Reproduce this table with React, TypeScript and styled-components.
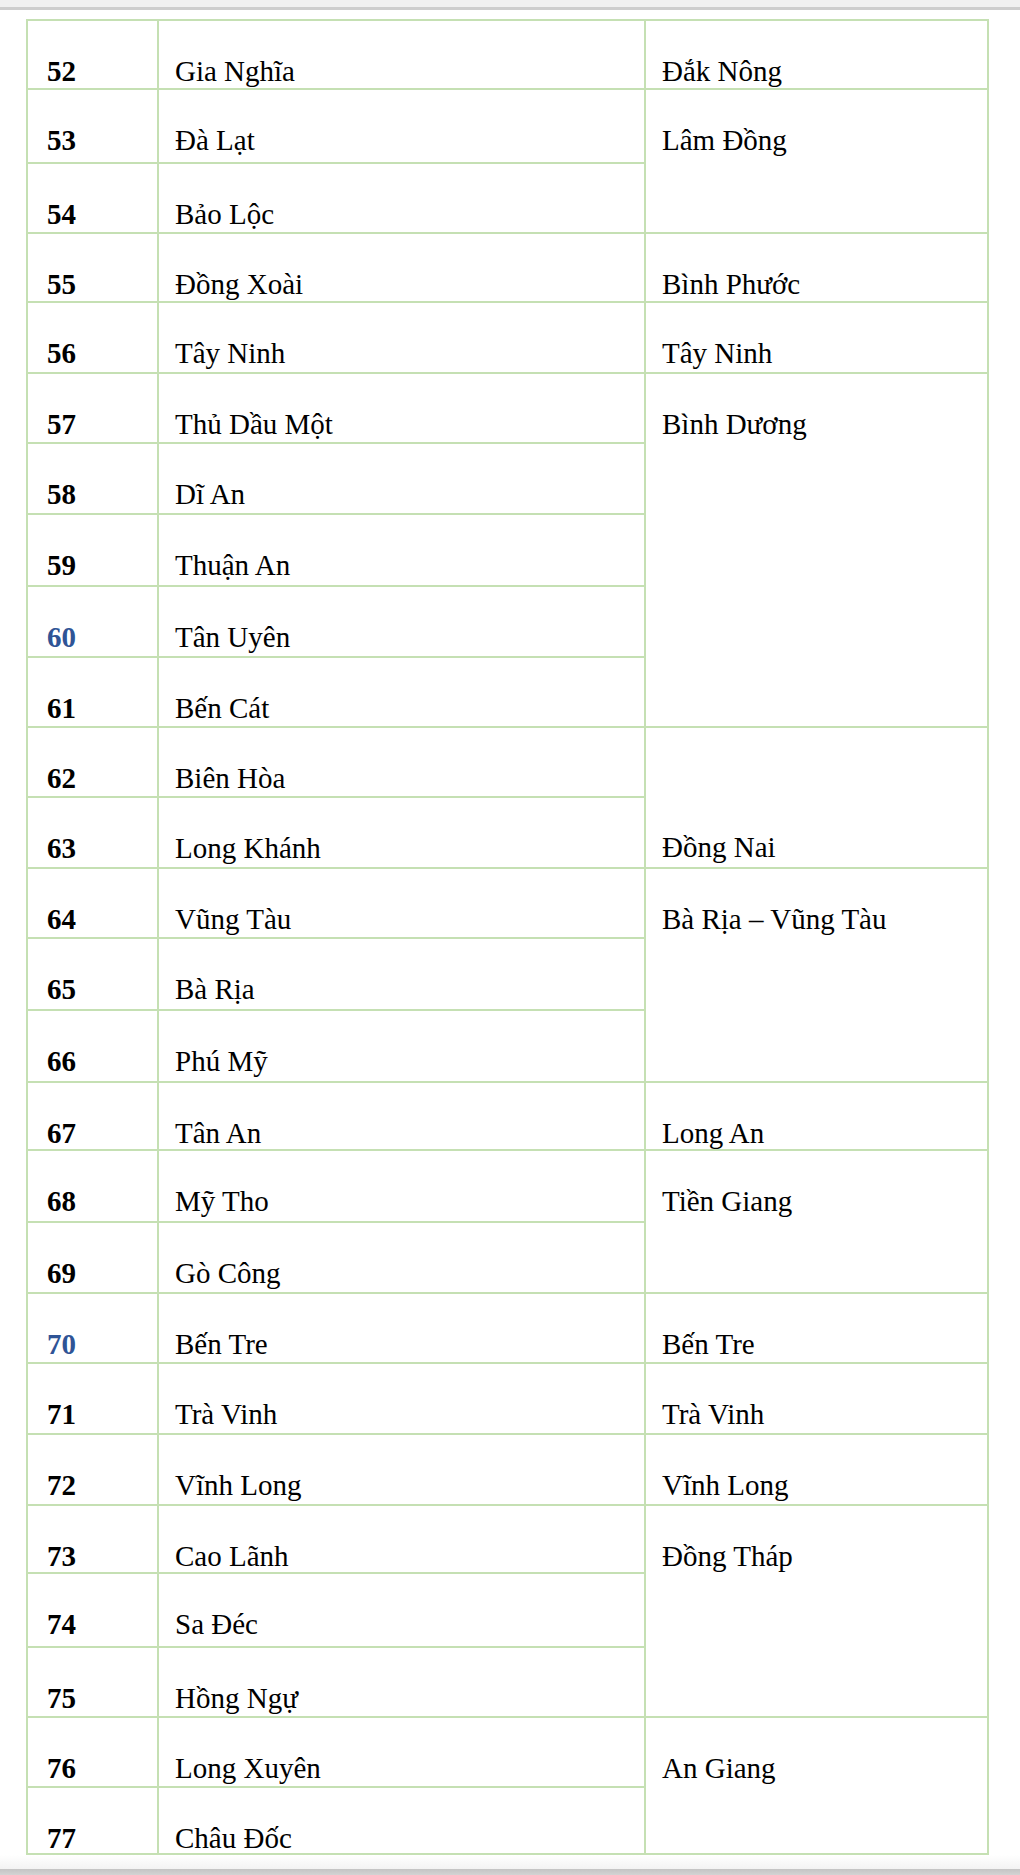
import React from "react";
import styled, { createGlobalStyle } from "styled-components";

const GlobalStyle = createGlobalStyle`
  html, body { margin: 0; padding: 0; background: #ffffff; }
  #root { min-height: 1875px; }
`;

const LINE = "#c5e0b3";

const Page = styled.div`
  display: flex;
  flex-direction: column;
  height: 1875px;
  background: #ffffff;
  overflow: hidden;
`;

const TopBar = styled.div`
  flex: 0 0 auto;
  height: 7px;
  background: #f0f0f0;
  border-bottom: 3px solid #cdcdcd;
`;

const Content = styled.main`
  flex: 1 1 auto;
  padding: 9px 0 0 26px;
`;

const BottomFade = styled.div`
  flex: 0 0 14px;
  background: linear-gradient(#ffffff, #f3f3f3);
`;

const BottomBar = styled.div`
  flex: 0 0 7px;
  background: linear-gradient(#c4c4c4, #d6d6d6);
`;

const Table = styled.table`
  border-collapse: separate;
  border-spacing: 0;
  table-layout: fixed;
  width: 963px;
  border-top: 2px solid ${LINE};
  border-left: 2px solid ${LINE};
  font-family: "Liberation Serif", "Times New Roman", serif;
  font-size: 29px;
  line-height: 30px;
  color: #000000;
`;

const Row = styled.tr<{ $h: number }>`
  height: ${(p) => p.$h}px;
`;

const Cell = styled.td<{ $w?: number; $pad: number; $bottom?: boolean }>`
  box-sizing: border-box;
  ${(p) => (p.$w ? `width: ${p.$w}px;` : "")}
  border-right: 2px solid ${LINE};
  border-bottom: 2px solid ${LINE};
  padding: ${(p) => (p.$bottom ? "0" : "34.5px")} 0 ${(p) => (p.$bottom ? "5px" : "0")} ${(p) => p.$pad}px;
  vertical-align: ${(p) => (p.$bottom ? "bottom" : "top")};
  white-space: nowrap;
`;

const Num = styled.span<{ $blue?: boolean }>`
  font-weight: 700;
  color: ${(p) => (p.$blue ? "#2f5496" : "#000000")};
`;

type Item = {
  n: number;
  city: string;
  h: number;
  blue?: boolean;
  prov?: string;
  span?: number;
  bottom?: boolean;
};

const rows: Item[] = [
  { n: 52, city: "Gia Nghĩa", h: 69, prov: "Đắk Nông", span: 1 },
  { n: 53, city: "Đà Lạt", h: 74, prov: "Lâm Đồng", span: 2 },
  { n: 54, city: "Bảo Lộc", h: 70 },
  { n: 55, city: "Đồng Xoài", h: 69, prov: "Bình Phước", span: 1 },
  { n: 56, city: "Tây Ninh", h: 71, prov: "Tây Ninh", span: 1 },
  { n: 57, city: "Thủ Dầu Một", h: 70, prov: "Bình Dương", span: 5 },
  { n: 58, city: "Dĩ An", h: 71 },
  { n: 59, city: "Thuận An", h: 72 },
  { n: 60, city: "Tân Uyên", h: 71, blue: true },
  { n: 61, city: "Bến Cát", h: 70 },
  { n: 62, city: "Biên Hòa", h: 70, prov: "Đồng Nai", span: 2, bottom: true },
  { n: 63, city: "Long Khánh", h: 71 },
  { n: 64, city: "Vũng Tàu", h: 70, prov: "Bà Rịa – Vũng Tàu", span: 3 },
  { n: 65, city: "Bà Rịa", h: 72 },
  { n: 66, city: "Phú Mỹ", h: 72 },
  { n: 67, city: "Tân An", h: 68, prov: "Long An", span: 1 },
  { n: 68, city: "Mỹ Tho", h: 72, prov: "Tiền Giang", span: 2 },
  { n: 69, city: "Gò Công", h: 71 },
  { n: 70, city: "Bến Tre", h: 70, blue: true, prov: "Bến Tre", span: 1 },
  { n: 71, city: "Trà Vinh", h: 71, prov: "Trà Vinh", span: 1 },
  { n: 72, city: "Vĩnh Long", h: 71, prov: "Vĩnh Long", span: 1 },
  { n: 73, city: "Cao Lãnh", h: 68, prov: "Đồng Tháp", span: 3 },
  { n: 74, city: "Sa Đéc", h: 74 },
  { n: 75, city: "Hồng Ngự", h: 70 },
  { n: 76, city: "Long Xuyên", h: 70, prov: "An Giang", span: 2 },
  { n: 77, city: "Châu Đốc", h: 67 },
];

export default function App() {
  return (
    <>
      <GlobalStyle />
      <Page>
        <TopBar />
        <Content>
          <Table>
            <tbody>
              {rows.map((r, i) => (
                <Row key={r.n} $h={r.h}>
                  <Cell $w={i === 0 ? 131 : undefined} $pad={19}>
                    <Num $blue={r.blue}>{r.n}</Num>
                  </Cell>
                  <Cell $w={i === 0 ? 487 : undefined} $pad={16}>
                    {r.city}
                  </Cell>
                  {r.prov !== undefined && (
                    <Cell
                      $w={i === 0 ? 343 : undefined}
                      $pad={16}
                      rowSpan={r.span}
                      $bottom={r.bottom}
                    >
                      {r.prov}
                    </Cell>
                  )}
                </Row>
              ))}
            </tbody>
          </Table>
        </Content>
        <BottomFade />
        <BottomBar />
      </Page>
    </>
  );
}
